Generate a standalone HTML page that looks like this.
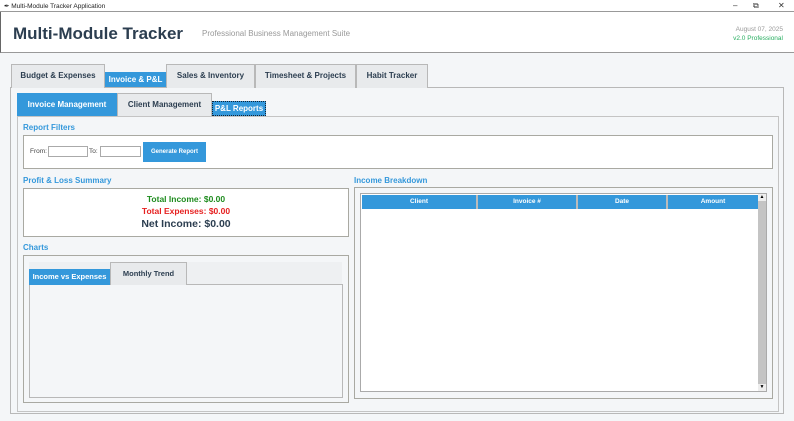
<!DOCTYPE html>
<html><head><style>
*{margin:0;padding:0;box-sizing:border-box}
body{width:794px;height:421px;position:relative;background:#f4f6f8;font-family:"Liberation Sans",sans-serif;overflow:hidden}
.a{position:absolute}
.tab{position:absolute;background:#e8eaec;border:1px solid #b8b8b8;border-bottom:none;font-weight:bold;font-size:8px;color:#2c3e50;text-align:center;white-space:nowrap}
.sel{background:#3498db;color:#fff;border:none}
.box{position:absolute;border:1px solid #a9a9a2;background:#fff}
.lbl{position:absolute;color:#3498db;font-weight:bold;font-size:8px}
.th{position:absolute;top:195px;height:14px;background:#3498db;color:#fff;font-size:6.5px;font-weight:bold;text-align:center;line-height:14px;border-right:2px solid #bbb}
</style></head><body>
<div class="a" style="left:0;top:0;width:794px;height:12px;background:#fff;border-bottom:1px solid #999"></div>
<div class="a" style="left:4px;top:2px;font-size:6.5px;color:#222">&#x2712; Multi-Module Tracker Application</div>
<div class="a" style="left:733px;top:1px;font-size:8px;color:#333">&#8211;</div>
<div class="a" style="left:753px;top:1px;font-size:8px;color:#333">&#10697;</div>
<div class="a" style="left:778px;top:1px;font-size:8px;color:#333">&#10005;</div>
<div class="a" style="left:0;top:12px;width:794px;height:41px;background:#fff;border-bottom:1px solid #999;border-left:1px solid #666"></div>
<div class="a" style="left:13px;top:24px;font-size:17px;font-weight:bold;color:#2c3e50">Multi-Module Tracker</div>
<div class="a" style="left:202px;top:29px;font-size:8px;color:#999">Professional Business Management Suite</div>
<div class="a" style="left:700px;top:26px;width:83px;text-align:right;font-size:6.5px;color:#999">August 07, 2025</div>
<div class="a" style="left:700px;top:35px;width:83px;text-align:right;font-size:6.5px;color:#27ae60">v2.0 Professional</div>

<div class="a" style="left:10px;top:87px;width:774px;height:327px;border:1px solid #b8b8b8;background:#f4f6f8"></div>
<div class="tab" style="left:11px;top:64px;width:94px;height:24px;line-height:22px">Budget &amp; Expenses</div>
<div class="tab sel" style="left:105px;top:72px;width:61px;height:15px;line-height:15px">Invoice &amp; P&amp;L</div>
<div class="tab" style="left:166px;top:64px;width:89px;height:24px;line-height:22px">Sales &amp; Inventory</div>
<div class="tab" style="left:255px;top:64px;width:101px;height:24px;line-height:22px">Timesheet &amp; Projects</div>
<div class="tab" style="left:356px;top:64px;width:72px;height:24px;line-height:22px">Habit Tracker</div>

<div class="a" style="left:17px;top:116px;width:762px;height:296px;border:1px solid #c4c4c4;background:#f4f6f8"></div>
<div class="tab sel" style="left:17px;top:93px;width:100px;height:23px;line-height:23px">Invoice Management</div>
<div class="tab" style="left:117px;top:93px;width:95px;height:23px;line-height:22px">Client Management</div>
<div class="tab sel" style="left:212px;top:101px;width:54px;height:15px;line-height:13px;border:1px dotted #123">P&amp;L Reports</div>

<div class="lbl" style="left:23px;top:123px">Report Filters</div>
<div class="box" style="left:23px;top:135px;width:750px;height:34px;background:#fff"></div>
<div class="a" style="left:30px;top:148px;font-size:6.5px;color:#444">From:</div>
<div class="a" style="left:48px;top:146px;width:40px;height:11px;border:1px solid #aaa;background:#fff"></div>
<div class="a" style="left:89px;top:148px;font-size:6.5px;color:#444">To:</div>
<div class="a" style="left:100px;top:146px;width:41px;height:11px;border:1px solid #aaa;background:#fff"></div>
<div class="a" style="left:143px;top:142px;width:63px;height:20px;background:#3498db;color:#fff;font-size:6px;font-weight:bold;text-align:center;line-height:20px">Generate Report</div>

<div class="lbl" style="left:23px;top:176px">Profit &amp; Loss Summary</div>
<div class="box" style="left:23px;top:188px;width:326px;height:49px"></div>
<div class="a" style="left:23px;top:194px;width:326px;text-align:center;font-size:8.5px;font-weight:bold;color:#1e8c1e">Total Income: $0.00</div>
<div class="a" style="left:23px;top:206px;width:326px;text-align:center;font-size:8.5px;font-weight:bold;color:#e62020">Total Expenses: $0.00</div>
<div class="a" style="left:23px;top:218px;width:326px;text-align:center;font-size:10.5px;font-weight:bold;color:#2c3e50">Net Income: $0.00</div>

<div class="lbl" style="left:23px;top:243px">Charts</div>
<div class="box" style="left:23px;top:255px;width:326px;height:148px;background:#f4f6f8"></div>
<div class="a" style="left:29px;top:262px;width:313px;height:22px;background:#eef0f2"></div>
<div class="a" style="left:29px;top:284px;width:314px;height:114px;border:1px solid #b8b8b8;background:#f4f6f8"></div>
<div class="tab sel" style="left:29px;top:269px;width:81px;height:16px;line-height:16px;font-size:7.5px">Income vs Expenses</div>
<div class="tab" style="left:110px;top:262px;width:77px;height:23px;line-height:21px;font-size:7.5px">Monthly Trend</div>

<div class="lbl" style="left:354px;top:176px">Income Breakdown</div>
<div class="box" style="left:354px;top:187px;width:419px;height:212px;background:#f4f6f8"></div>
<div class="a" style="left:360px;top:193px;width:407px;height:199px;border:1px solid #aaa;background:#fff"></div>
<div class="th" style="left:362px;width:116px">Client</div>
<div class="th" style="left:478px;width:100px">Invoice #</div>
<div class="th" style="left:578px;width:90px">Date</div>
<div class="th" style="left:668px;width:90px;border-right:none">Amount</div>
<div class="a" style="left:758px;top:194px;width:8px;height:197px;background:#c4c4c4"></div>
<div class="a" style="left:758px;top:194px;width:8px;height:7px;background:#eee;font-size:5px;text-align:center">&#9650;</div>
<div class="a" style="left:758px;top:384px;width:8px;height:7px;background:#eee;font-size:5px;text-align:center">&#9660;</div>
</body></html>
